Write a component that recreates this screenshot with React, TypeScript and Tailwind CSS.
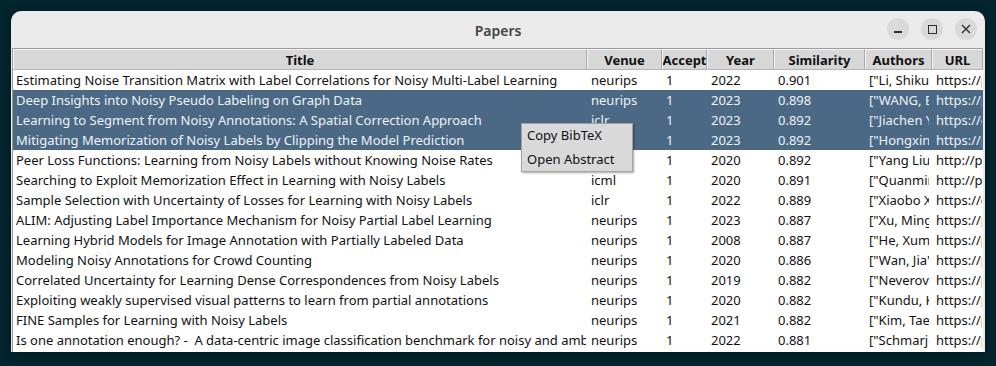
import React from "react";

type Row = [string, string, string, string, string, string, string];

const rows: Row[] = [
  ["Estimating Noise Transition Matrix with Label Correlations for Noisy Multi-Label Learning", "neurips", "1", "2022", "0.901", '["Li, Shikun", "Xia, Xiaobo"]', "https://proceedings.neurips.cc"],
  ["Deep Insights into Noisy Pseudo Labeling on Graph Data", "neurips", "1", "2023", "0.898", '["WANG, Botao", "Li, Jia"]', "https://proceedings.neurips.cc"],
  ["Learning to Segment from Noisy Annotations: A Spatial Correction Approach", "iclr", "1", "2023", "0.892", '["Jiachen Yao", "Yikai Zhang"]', "https://openreview.net"],
  ["Mitigating Memorization of Noisy Labels by Clipping the Model Prediction", "icml", "1", "2023", "0.892", '["Hongxin Wei", "Huiping Zhuang"]', "https://proceedings.mlr.press"],
  ["Peer Loss Functions: Learning from Noisy Labels without Knowing Noise Rates", "icml", "1", "2020", "0.892", '["Yang Liu", "Hongyi Guo"]', "http://proceedings.mlr.press"],
  ["Searching to Exploit Memorization Effect in Learning with Noisy Labels", "icml", "1", "2020", "0.891", '["Quanming Yao", "Hansi Yang"]', "http://proceedings.mlr.press"],
  ["Sample Selection with Uncertainty of Losses for Learning with Noisy Labels", "iclr", "1", "2022", "0.889", '["Xiaobo Xia", "Tongliang Liu"]', "https://openreview.net"],
  ["ALIM: Adjusting Label Importance Mechanism for Noisy Partial Label Learning", "neurips", "1", "2023", "0.887", '["Xu, Mingyu", "Lian, Zheng"]', "https://proceedings.neurips.cc"],
  ["Learning Hybrid Models for Image Annotation with Partially Labeled Data", "neurips", "1", "2008", "0.887", '["He, Xuming", "Zemel, Richard"]', "https://proceedings.neurips.cc"],
  ["Modeling Noisy Annotations for Crowd Counting", "neurips", "1", "2020", "0.886", '["Wan, Jia", "Chan, Antoni"]', "https://proceedings.neurips.cc"],
  ["Correlated Uncertainty for Learning Dense Correspondences from Noisy Labels", "neurips", "1", "2019", "0.882", '["Neverova, Natalia"]', "https://proceedings.neurips.cc"],
  ["Exploiting weakly supervised visual patterns to learn from partial annotations", "neurips", "1", "2020", "0.882", '["Kundu, Kaustav"]', "https://proceedings.neurips.cc"],
  ["FINE Samples for Learning with Noisy Labels", "neurips", "1", "2021", "0.882", '["Kim, Taehyeon"]', "https://proceedings.neurips.cc"],
  ["Is one annotation enough? -  A data-centric image classification benchmark for noisy and ambiguous label estimation", "neurips", "1", "2022", "0.881", '["Schmarje, Lars"]', "https://proceedings.neurips.cc"],
];

const widths = ["w-[574px]", "w-[75px]", "w-[45px]", "w-[67px]", "w-[91px]", "w-[67px]", "w-[51px]"];
const headers = ["Title", "Venue", "Accept", "Year", "Similarity", "Authors", "URL"];

export default function App() {
  return (
    <div
      className="w-[996px] h-[366px] bg-[#03252f] pt-[11px] pl-[11px]"
      style={{ fontFamily: '"Noto Sans", "DejaVu Sans", sans-serif' }}
    >
      <div className="relative w-[974px] h-[341px] bg-[#ebebeb] rounded-t-[10px] flex flex-col shadow-[0_2px_10px_rgba(0,0,0,0.4)]">
        {/* Title bar */}
        <div className="h-[37px] flex items-center justify-center relative shrink-0">
          <span className="text-[14px] font-semibold text-[#444] pt-[1px]">Papers</span>
          <div className="absolute right-[8px] top-[7px] flex gap-[12px]">
            <div className="w-[22px] h-[22px] rounded-full bg-[#dadada] flex items-center justify-center">
              <div className="w-[8px] h-[1.5px] bg-[#2e2e2e] mt-[6px]" />
            </div>
            <div className="w-[22px] h-[22px] rounded-full bg-[#dadada] flex items-center justify-center">
              <div className="w-[9px] h-[9px] border-[1.5px] border-[#2e2e2e]" />
            </div>
            <div className="w-[22px] h-[22px] rounded-full bg-[#dadada] flex items-center justify-center">
              <svg width="10" height="10" viewBox="0 0 10 10">
                <path d="M1 1 L9 9 M9 1 L1 9" stroke="#2e2e2e" strokeWidth="1.4" />
              </svg>
            </div>
          </div>
        </div>
        {/* Table */}
        <div className="ml-[1px] mr-[2px] border-t border-l border-[#9c9c9c] bg-white flex-1 flex flex-col">
          <div className="flex h-[21px] bg-[#d7d7d7] border-b border-[#b5b5b5]">
            {headers.map((h, i) => (
              <div
                key={h}
                className={`${widths[i]} shrink-0 h-full border-r border-[#a8a8a8] border-l border-l-[#f4f4f4] border-t border-t-[#f4f4f4] overflow-hidden whitespace-nowrap flex items-center justify-center text-[13px] font-bold text-[#111] leading-[18px]`}
              >
                {h}
              </div>
            ))}
          </div>
          {rows.map((r, ri) => {
            const sel = ri >= 1 && ri <= 3;
            return (
              <div
                key={ri}
                className={`flex h-[20px] text-[13px] leading-[20px] ${sel ? "bg-[#4b6985] text-[#eef2f6]" : "bg-white text-[#111]"}`}
              >
                {r.map((c, ci) => (
                  <div
                    key={ci}
                    className={`${widths[ci]} shrink-0 h-[20px] overflow-hidden whitespace-pre ${ci === 0 ? "pl-[3px] pr-[1px]" : ci === 5 ? "pl-[4px] pr-[3px]" : "pl-[4px] pr-[1px]"}`}
                  >
                    <div className="overflow-hidden h-[20px]">{c}</div>
                  </div>
                ))}
              </div>
            );
          })}
        </div>
        {/* Context menu */}
        <div className="absolute left-[510px] top-[112px] w-[112px] h-[49px] bg-[#d9d9d9] border border-[#a2a2a2] shadow-[1px_1px_2px_rgba(0,0,0,0.35)] flex flex-col text-[13px] text-[#111]">
          <div className="h-[24px] flex items-center pl-[5px]">Copy BibTeX</div>
          <div className="h-[24px] flex items-center pl-[5px]">Open Abstract</div>
        </div>
      </div>
    </div>
  );
}
